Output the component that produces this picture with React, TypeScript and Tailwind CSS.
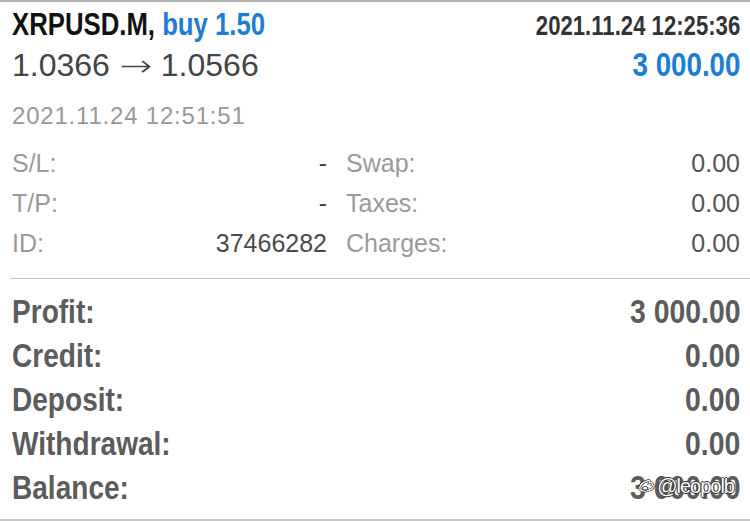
import React from "react";

const bold = "font-['Liberation_Sans',Arial,sans-serif] font-bold";
const regular = "font-['Liberation_Sans',Arial,sans-serif]";

function DetailRow({ l1, v1, l2, v2 }: { l1: string; v1: string; l2: string; v2: string }) {
  return (
    <div className={`flex h-[40px] items-baseline text-[25px] leading-[40px] ${regular}`}>
      <div className="flex w-[315px] justify-between">
        <span className="text-[#9a9a9a]">{l1}</span>
        <span className="text-[#4a4a4a]">{v1}</span>
      </div>
      <div className="ml-[19px] flex flex-1 justify-between">
        <span className="text-[#9a9a9a]">{l2}</span>
        <span className="text-[#555]">{v2}</span>
      </div>
    </div>
  );
}

function TotalRow({ label, value, children }: { label: string; value: string; children?: React.ReactNode }) {
  return (
    <div className={`relative flex h-[44px] items-baseline justify-between text-[33px] leading-[44px] text-[#5c5c5c] ${bold}`}>
      <span className="inline-block origin-left scale-x-[0.85]">{label}</span>
      <span className="inline-block origin-right scale-x-[0.86]">{value}</span>
      {children}
    </div>
  );
}

export default function App() {
  return (
    <div className="h-[522px] w-[750px] overflow-hidden border-t-2 border-[#b0b0b0] bg-white">
      <div className="pl-3 pr-[10px] pt-[3px]">
        <div className="flex h-[40px] items-baseline justify-between leading-[40px]">
          <span className={`inline-block origin-left scale-x-[0.83] whitespace-nowrap text-[31px] ${bold}`}>
            <span className="text-[#111]">XRPUSD.M,</span>{" "}
            <span className="text-[#1b7dd9]">buy 1.50</span>
          </span>
          <span className={`inline-block origin-right scale-x-[0.82] whitespace-nowrap text-[27px] text-[#333] ${bold}`}>
            2021.11.24 12:25:36
          </span>
        </div>
        <div className="flex h-[40px] items-baseline justify-between leading-[40px]">
          <span className={`whitespace-nowrap text-[32px] text-[#444] ${regular}`}>
            1.0366{" "}
            <span className="inline-block origin-center scale-x-[1.3] px-[4px] font-['DejaVu_Sans',sans-serif] text-[30px] font-light">
              →
            </span>{" "}
            1.0566
          </span>
          <span className={`inline-block origin-right scale-x-[0.84] whitespace-nowrap text-[33px] text-[#1b7dd9] ${bold}`}>
            3 000.00
          </span>
        </div>
        <div className={`mt-[11px] h-[40px] text-[24px] leading-[40px] tracking-[0.8px] text-[#999] ${regular}`}>
          2021.11.24 12:51:51
        </div>
        <div className="mt-[7px]">
          <DetailRow l1="S/L:" v1="-" l2="Swap:" v2="0.00" />
          <DetailRow l1="T/P:" v1="-" l2="Taxes:" v2="0.00" />
          <DetailRow l1="ID:" v1="37466282" l2="Charges:" v2="0.00" />
        </div>
      </div>
      <div className="ml-[10px] mt-[15px] h-px bg-[#c8c8c8]" />
      <div className="mt-[11px] pl-3 pr-[10px]">
        <TotalRow label="Profit:" value="3 000.00" />
        <TotalRow label="Credit:" value="0.00" />
        <TotalRow label="Deposit:" value="0.00" />
        <TotalRow label="Withdrawal:" value="0.00" />
        <TotalRow label="Balance:" value="3 000.00">
          <div className="absolute right-[6px] top-[10px] flex items-center">
            <svg width="20" height="20" viewBox="0 0 22 20" fill="none">
              <path
                d="M3 12c0-3 4-7 9-8 2-.4 2 1 1.5 2.5C15 6 17.5 6 16.5 8.5c2.2.6 2 3.2-.2 4.8-2.8 2-8.5 3-11.5 1.5C3 14 3 13 3 12z"
                stroke="#3a3a3a"
                strokeWidth="3"
                fill="#ffffff"
              />
              <path
                d="M3 12c0-3 4-7 9-8 2-.4 2 1 1.5 2.5C15 6 17.5 6 16.5 8.5c2.2.6 2 3.2-.2 4.8-2.8 2-8.5 3-11.5 1.5C3 14 3 13 3 12z"
                stroke="#ffffff"
                strokeWidth="1.4"
                fill="none"
              />
              <ellipse cx="9" cy="12.5" rx="3" ry="2" stroke="#555" strokeWidth="1.2" fill="none" />
            </svg>
            <span
              className={`text-[20px] font-normal leading-none tracking-[-1px] text-white [text-shadow:1px_0_0_#333,-1px_0_0_#333,0_1px_0_#333,0_-1px_0_#333] ${regular}`}
            >
              @leopolb
            </span>
          </div>
        </TotalRow>
      </div>
      <div className="mt-[9px] h-[2px] bg-[#c8c8c8]" />
    </div>
  );
}
